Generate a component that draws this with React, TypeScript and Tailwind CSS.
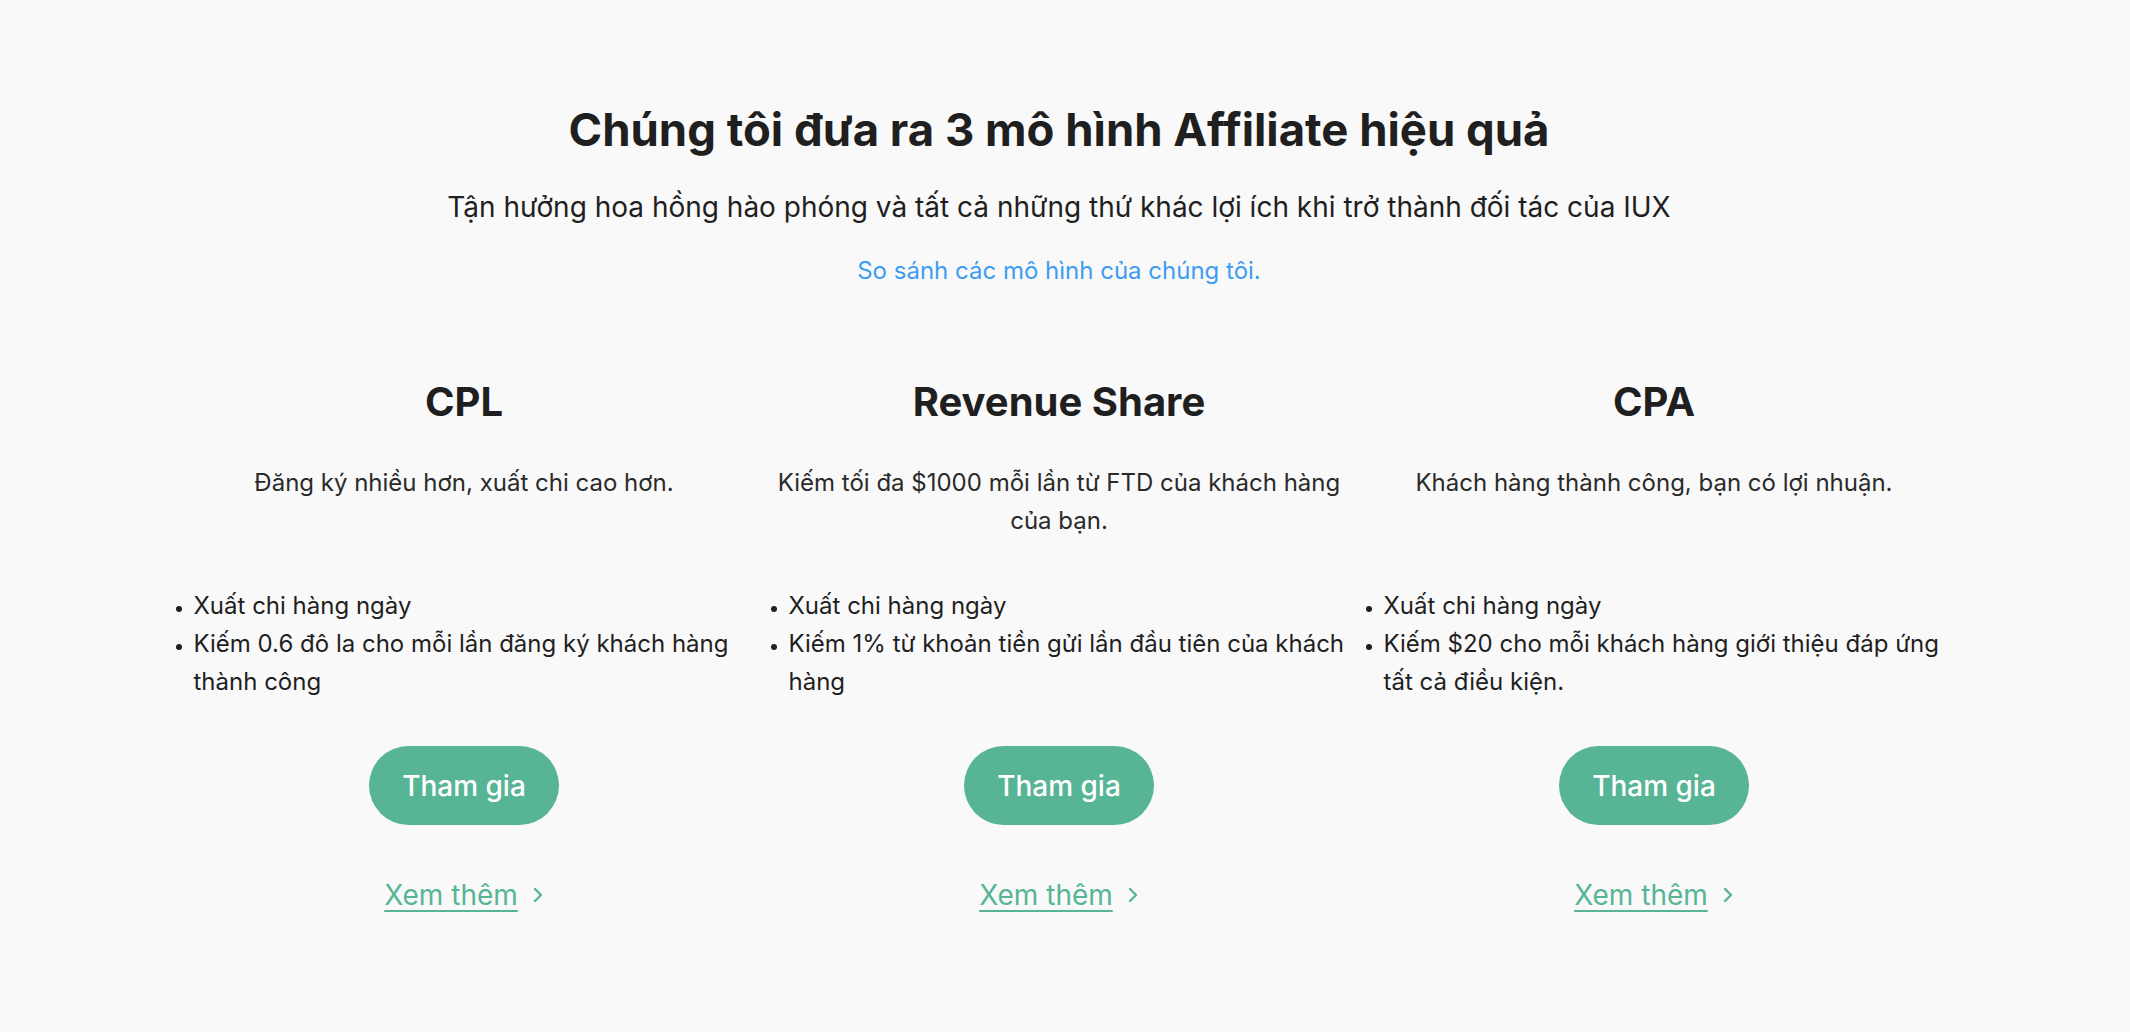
type Model = {
  name: string;
  desc: string;
  points: string[];
};

const MODELS: Model[] = [
  {
    name: 'CPL',
    desc: 'Đăng ký nhiều hơn, xuất chi cao hơn.',
    points: ['Xuất chi hàng ngày', 'Kiếm 0.6 đô la cho mỗi lần đăng ký khách hàng thành công'],
  },
  {
    name: 'Revenue Share',
    desc: 'Kiếm tối đa $1000 mỗi lần từ FTD của khách hàng của bạn.',
    points: ['Xuất chi hàng ngày', 'Kiếm 1% từ khoản tiền gửi lần đầu tiên của khách hàng'],
  },
  {
    name: 'CPA',
    desc: 'Khách hàng thành công, bạn có lợi nhuận.',
    points: ['Xuất chi hàng ngày', 'Kiếm $20 cho mỗi khách hàng giới thiệu đáp ứng tất cả điều kiện.'],
  },
];

function Chevron() {
  return (
    <svg width="12" height="18" viewBox="0 0 12 18" fill="none" stroke="currentColor" strokeWidth="2.4" strokeLinecap="round" strokeLinejoin="round">
      <path d="M3 3l6 6-6 6" />
    </svg>
  );
}

function ModelColumn({ model }: { model: Model }) {
  return (
    <div className="flex flex-col items-center">
      <h3 className="text-[40px] font-bold leading-[48px] text-[#1f1f1f]">{model.name}</h3>

      <p className="mt-[38px] h-[76px] text-center text-[24px] leading-[38px] text-[#2a2a2a]">
        {model.desc}
      </p>

      <ul className="mt-[47px] w-full list-disc pl-[27px] text-[24px] leading-[38px] text-[#1f1f1f] marker:text-[18px]">
        {model.points.map((p) => (
          <li key={p}>{p}</li>
        ))}
      </ul>

      <button className="mt-[45px] h-[79px] w-[190px] rounded-full bg-[#57b596] text-[28px] font-medium text-white">
        Tham gia
      </button>

      <a href="#" className="mt-[50px] flex items-center gap-[14px] text-[28px] leading-[40px] text-[#57b596]">
        <span className="underline decoration-2 underline-offset-[5px]">Xem thêm</span>
        <Chevron />
      </a>
    </div>
  );
}

export default function App() {
  return (
    <div className="min-h-screen bg-[#f9f9f9] font-['Inter','Noto_Sans',sans-serif]">
      <section className="flex flex-col items-center pt-[103px] pr-[12px] pb-20">
        <h2 className="text-[45.5px] font-bold leading-[54px] text-[#1f1f1f]">
          Chúng tôi đưa ra 3 mô hình Affiliate hiệu quả
        </h2>
        <p className="mt-[31px] text-[28px] leading-[39px] text-[#1f1f1f]">
          Tận hưởng hoa hồng hào phóng và tất cả những thứ khác lợi ích khi trở thành đối tác của IUX
        </p>
        <a href="#" className="mt-[26px] text-[24px] leading-[36px] text-[#3d9df3]">
          So sánh các mô hình của chúng tôi.
        </a>

        <div className="mt-[89px] grid w-[1785px] grid-cols-3">
          {MODELS.map((m) => (
            <ModelColumn key={m.name} model={m} />
          ))}
        </div>
      </section>
    </div>
  );
}
